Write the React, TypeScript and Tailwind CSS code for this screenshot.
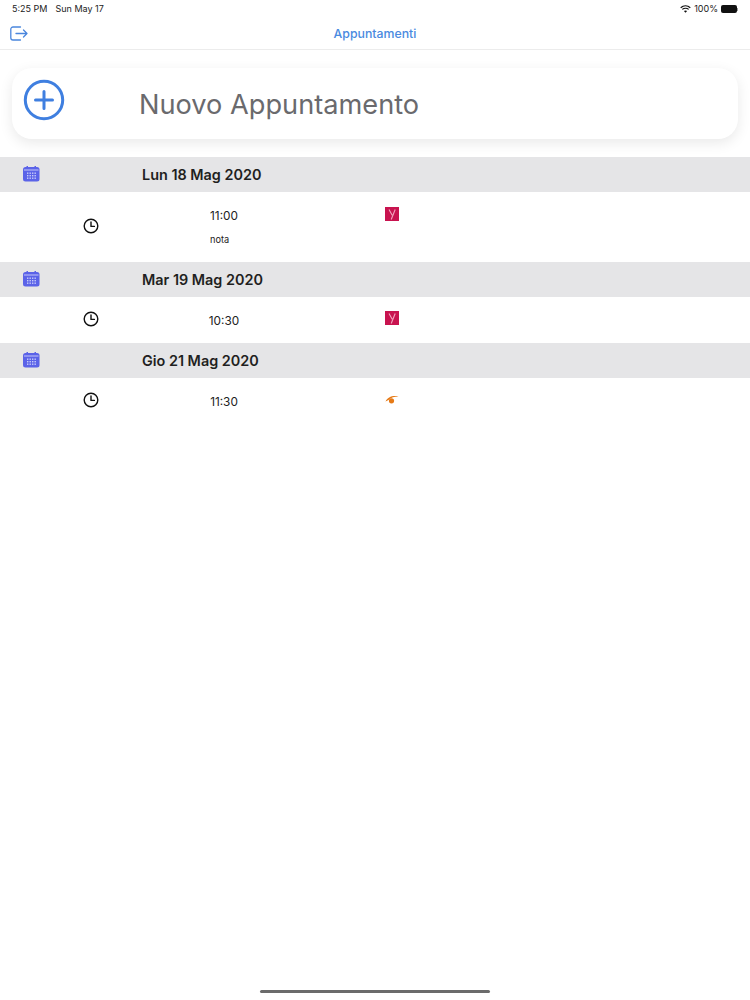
const font = { fontFamily: "Inter, 'Liberation Sans', sans-serif" };

const CalendarIcon = () => (
  <svg width="17" height="16" viewBox="0 0 17 16">
    <rect x="0" y="1" width="16.5" height="14.5" rx="2.5" fill="#5b63e8" />
    <rect x="3.5" y="0" width="1.5" height="2.5" fill="#5b63e8" />
    <rect x="11.5" y="0" width="1.5" height="2.5" fill="#5b63e8" />
    <rect x="1" y="3.5" width="14.5" height="1" fill="#c5c8f8" />
    {[6.5, 9, 11.5].map((y) =>
      [4, 6.5, 9, 11.5].map((x) => <rect key={`${x}-${y}`} x={x} y={y} width="1.4" height="1.4" fill="#c9ccfa" />)
    )}
  </svg>
);

const ClockIcon = () => (
  <svg width="16" height="16" viewBox="0 0 16 16" fill="none" stroke="#111" strokeWidth="1.4">
    <circle cx="8" cy="8" r="6.8" />
    <path d="M8 4v4.4h3.4" strokeLinecap="round" strokeLinejoin="round" />
  </svg>
);

const YLogo = () => (
  <div className="w-[14px] h-[14px] bg-[#c8134f] flex items-center justify-center">
    <svg width="10" height="12" viewBox="0 0 10 12" fill="none" stroke="#f2a5bf" strokeWidth="1.1">
      <path d="M2 1.5 5.2 7.2M8.2 1.5 4.2 11.5" />
    </svg>
  </div>
);

const EyeLogo = () => (
  <svg width="14" height="9" viewBox="0 0 14 9">
    <path d="M0.5 6.5C2.5 2 8 0 13.5 1.5 9.5 1.5 6 2.5 3.5 5Z" fill="#e67a17" />
    <circle cx="6.5" cy="5.8" r="2.6" fill="#e67a17" />
  </svg>
);

const Section = ({ title, children }: { title: string; children: React.ReactNode }) => (
  <>
    <div className="h-[35px] bg-[#e5e5e7] flex">
      <div className="w-[142px] pl-[23px] pt-[9px]">
        <CalendarIcon />
      </div>
      <div className="text-[14.4px] font-semibold text-[#1f1f21] leading-[36px]">{title}</div>
    </div>
    {children}
  </>
);

const Row = ({ time, note, logo }: { time: string; note?: string; logo: React.ReactNode }) => (
  <div className={`flex ${note ? "h-[70px] pt-[15px]" : "h-[46px] pt-[14px]"}`}>
    <div className={`w-[182px] flex justify-center ${note ? "pt-[11px]" : "pt-0"}`}>
      <ClockIcon />
    </div>
    <div className={`w-[84px] text-[11.8px] text-[#222] text-center leading-[16px] ${note ? "pt-px" : "pt-[2px]"}`}>
      {time}
      {note && <div className="text-[9.2px] text-left pl-[28px] pt-[9px] leading-[14px]">{note}</div>}
    </div>
    <div className="ml-[119px] h-[14px] flex items-center">{logo}</div>
  </div>
);

export default function App() {
  return (
    <div className="w-[750px] h-[1000px] bg-white flex flex-col" style={font}>
      <div className="h-[18px] px-[12px] flex items-center justify-between text-[9px] text-[#222]">
        <div className="flex gap-[8px]">
          <span>5:25 PM</span>
          <span>Sun May 17</span>
        </div>
        <div className="flex items-center gap-[3px]">
          <svg width="11" height="8" viewBox="0 0 11 8" fill="none" stroke="#111" strokeWidth="1.2">
            <path d="M0.7 2.7C3.5 0.3 7.5 0.3 10.3 2.7M2.3 4.4C4 3 7 3 8.7 4.4" />
            <path d="M5.5 7.8 3.9 6C4.8 5.3 6.2 5.3 7.1 6Z" fill="#111" stroke="none" />
          </svg>
          <span>100%</span>
          <div className="flex items-center">
            <div className="w-[16px] h-[8px] bg-[#111] rounded-[2px]" />
            <div className="w-px h-[3px] bg-[#999]" />
          </div>
        </div>
      </div>

      <div className="relative h-[32px] border-b border-[#ececec] flex items-center justify-center">
        <svg className="absolute left-[10px] top-[8px]" width="18" height="15" viewBox="0 0 18 15" fill="none" stroke="#4a86dd" strokeWidth="1.3" strokeLinecap="round" strokeLinejoin="round">
          <path d="M10.5 1H3a2.2 2.2 0 0 0-2.2 2.2v8.6A2.2 2.2 0 0 0 3 14h7.5" />
          <path d="M6 7.5h11M13.5 4l3.5 3.5-3.5 3.5" />
        </svg>
        <span className="text-[12.3px] font-medium text-[#4a8ae0] pt-[2px]">Appuntamenti</span>
      </div>

      <div className="px-[12px] pt-[18px] pb-[18px]">
        <div className="h-[71px] rounded-[20px] bg-white shadow-[0_4px_14px_rgba(0,0,0,0.09)] flex">
          <svg className="ml-[11px] mt-[11px]" width="42" height="42" viewBox="0 0 42 42" fill="none" stroke="#3f7fe0" strokeWidth="3">
            <circle cx="21" cy="21" r="18.7" />
            <path d="M21 12.5v17M12.5 21h17" strokeLinecap="round" />
          </svg>
          <div className="ml-[74px] text-[27.2px] text-[#6a6a6d] leading-[74px]">Nuovo Appuntamento</div>
        </div>
      </div>

      <Section title="Lun 18 Mag 2020">
        <Row time="11:00" note="nota" logo={<YLogo />} />
      </Section>
      <Section title="Mar 19 Mag 2020">
        <Row time="10:30" logo={<YLogo />} />
      </Section>
      <Section title="Gio 21 Mag 2020">
        <Row time="11:30" logo={<EyeLogo />} />
      </Section>

      <div className="flex-1" />
      <div className="h-[10px] flex justify-center">
        <div className="w-[230px] h-[3px] rounded-full bg-[#6b6b6b]" />
      </div>
    </div>
  );
}
